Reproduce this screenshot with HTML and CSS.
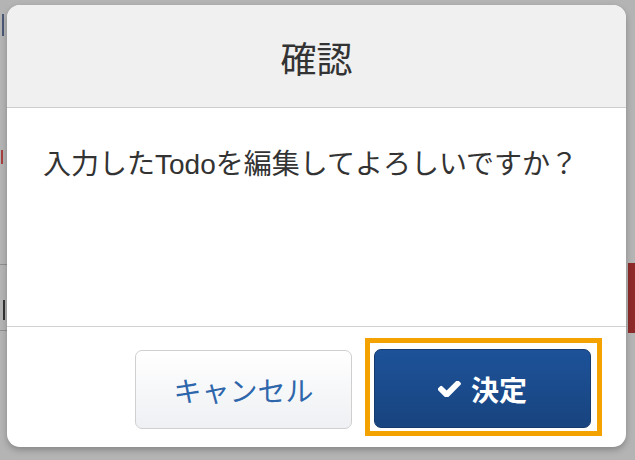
FILE: index.html
```html
<!DOCTYPE html>
<html lang="ja">
<head>
<meta charset="utf-8">
<title>確認</title>
<link rel="stylesheet" href="styles.css">
</head>
<body>
<div class="page-behind">
  <span class="mark mark-a"></span>
  <span class="mark mark-b"></span>
  <span class="mark mark-c"></span>
  <span class="rule rule-a"></span>
  <span class="rule rule-b"></span>
  <span class="redbar"></span>
</div>
<div class="dialog">
  <div class="dialog-header">確認</div>
  <div class="dialog-body">入力したTodoを編集してよろしいですか？</div>
  <div class="dialog-footer">
    <button class="btn btn-cancel">キャンセル</button>
    <span class="focus-ring">
      <button class="btn btn-ok"><svg class="check" viewBox="140 400 1532 1030" width="23" height="16"><path fill="#fff" d="M1671 566q0 40-28 68l-724 724-136 136q-28 28-68 28t-68-28l-136-136-362-362q-28-28-28-68t28-68l136-136q28-28 68-28t68 28l294 295 656-657q28-28 68-28t68 28l136 136q28 28 28 68z"/></svg>決定</button>
    </span>
  </div>
</div>
</body>
</html>
```

FILE: styles.css
```css
html, body {
  margin: 0;
  padding: 0;
}
body {
  width: 635px;
  height: 460px;
  overflow: hidden;
  background: #b4b4b4;
  font-family: "Liberation Sans", "Noto Sans CJK JP", sans-serif;
  position: relative;
}
.page-behind {
  position: absolute;
  inset: 0;
}
.mark {
  position: absolute;
  left: 0;
  width: 4px;
}
.mark-a { top: 14px; height: 22px; border-right: 2px solid #4a5876; width: 2px; }
.mark-b { top: 150px; height: 14px; border-right: 2px solid #a84040; width: 1px; }
.mark-c { top: 300px; height: 20px; border-right: 2px solid #333; width: 3px; }
.rule {
  position: absolute;
  left: 0;
  width: 8px;
  height: 1px;
  background: #8f8f8f;
}
.rule-a { top: 264px; }
.rule-b { top: 330px; }
.redbar {
  position: absolute;
  left: 628px;
  top: 263px;
  width: 7px;
  height: 70px;
  background: #8e2a2a;
}
.dialog {
  position: relative;
  margin: 5px 0 0 7px;
  width: 619px;
  height: 442px;
  background: #fff;
  border-radius: 13px;
  overflow: hidden;
  box-shadow: 0 3px 6px rgba(0, 0, 0, 0.25);
  display: flex;
  flex-direction: column;
}
.dialog-header {
  box-sizing: border-box;
  height: 103px;
  background: #f0f0f0;
  border-bottom: 1px solid #cdcdcd;
  display: flex;
  align-items: center;
  justify-content: center;
  font-family: "Noto Sans CJK JP", sans-serif;
  font-size: 36px;
  color: #333;
  padding-top: 2px;
}
.dialog-body {
  box-sizing: border-box;
  height: 218px;
  padding: 37px 0 0 36px;
  font-size: 28px;
  line-height: 40px;
  color: #333;
}
.dialog-footer {
  flex: 1;
  border-top: 1px solid #d2d2d2;
  display: flex;
  justify-content: flex-end;
  align-items: flex-start;
  gap: 13px;
  padding-right: 24px;
}
.btn {
  box-sizing: border-box;
  height: 79px;
  border-radius: 7px;
  font-family: "Noto Sans CJK JP", sans-serif;
  font-size: 28px;
  display: flex;
  align-items: center;
  justify-content: center;
  padding: 0;
}
.btn-cancel {
  width: 217px;
  margin-top: 23px;
  border: 1px solid #cfcfcf;
  background: linear-gradient(#ffffff, #eef0f3);
  color: #2e66ac;
}
.focus-ring {
  margin-top: 11px;
  border: 5px solid #f4a200;
  padding: 6px 6px 3px 4px;
  background: #fff;
}
.btn-ok {
  width: 217px;
  border: 1px solid #143a6e;
  background: linear-gradient(#1d5299, #18447f);
  color: #fff;
  font-weight: bold;
  gap: 10px;
}
.check {
  display: block;
}
```
